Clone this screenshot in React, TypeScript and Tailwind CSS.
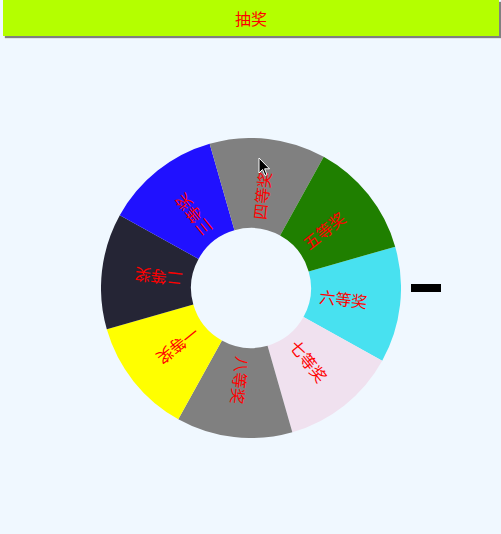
import React from "react";

const segs = [
  { label: "六等奖", color: "#48e1f0" },
  { label: "七等奖", color: "#f0e1ef" },
  { label: "八等奖", color: "#808080" },
  { label: "一等奖", color: "#ffff00" },
  { label: "二等奖", color: "#252535" },
  { label: "三等奖", color: "#2011ff" },
  { label: "四等奖", color: "#808080" },
  { label: "五等奖", color: "#1f7f00" },
];

const R = 150;
const r0 = 60;
const start = -16;

function pt(rad: number, deg: number) {
  const a = (deg * Math.PI) / 180;
  return [R + rad * Math.cos(a), R + rad * Math.sin(a)];
}

function sector(a0: number, a1: number) {
  const [x0, y0] = pt(R, a0);
  const [x1, y1] = pt(R, a1);
  const [x2, y2] = pt(r0, a1);
  const [x3, y3] = pt(r0, a0);
  return `M${x0} ${y0} A${R} ${R} 0 0 1 ${x1} ${y1} L${x2} ${y2} A${r0} ${r0} 0 0 0 ${x3} ${y3} Z`;
}

export default function App() {
  return (
    <div className="relative min-h-[534px] w-[501px] bg-[#f0f8ff]" style={{ fontFamily: '"Noto Sans CJK SC", "Noto Sans", sans-serif' }}>
      <div className="ml-[3px] mr-[2px] flex h-[36px] items-center justify-center bg-[#b4ff00] text-[16px] text-[#ff0000] shadow-[2px_2px_1px_#808080]">
        抽奖
      </div>
      <div className="ml-[101px] mt-[102px] flex items-center gap-[10px]">
        <svg width="300" height="300" viewBox="0 0 300 300">
          {segs.map((s, i) => {
            const a0 = start + i * 45;
            return <path key={i} d={sector(a0, a0 + 45)} fill={s.color} />;
          })}
          {segs.map((s, i) => {
            const mid = start + i * 45 + 22.5;
            return (
              <text
                key={"t" + i}
                x={69}
                y={0}
                dominantBaseline="central"
                fill="#ff0000"
                fontSize="16"
                transform={`translate(150 150) rotate(${mid})`}
              >
                {s.label}
              </text>
            );
          })}
        </svg>
        <div className="h-[8px] w-[30px] bg-black" />
      </div>
      <svg className="absolute left-[258px] top-[157px]" width="13" height="20" viewBox="0 0 13 20">
        <path d="M1 1 L1 16 L4.5 12.5 L7 18.5 L9 17.6 L6.6 11.8 L11.5 11.8 Z" fill="#000" stroke="#fff" strokeWidth="1" strokeLinejoin="round" />
      </svg>
    </div>
  );
}
